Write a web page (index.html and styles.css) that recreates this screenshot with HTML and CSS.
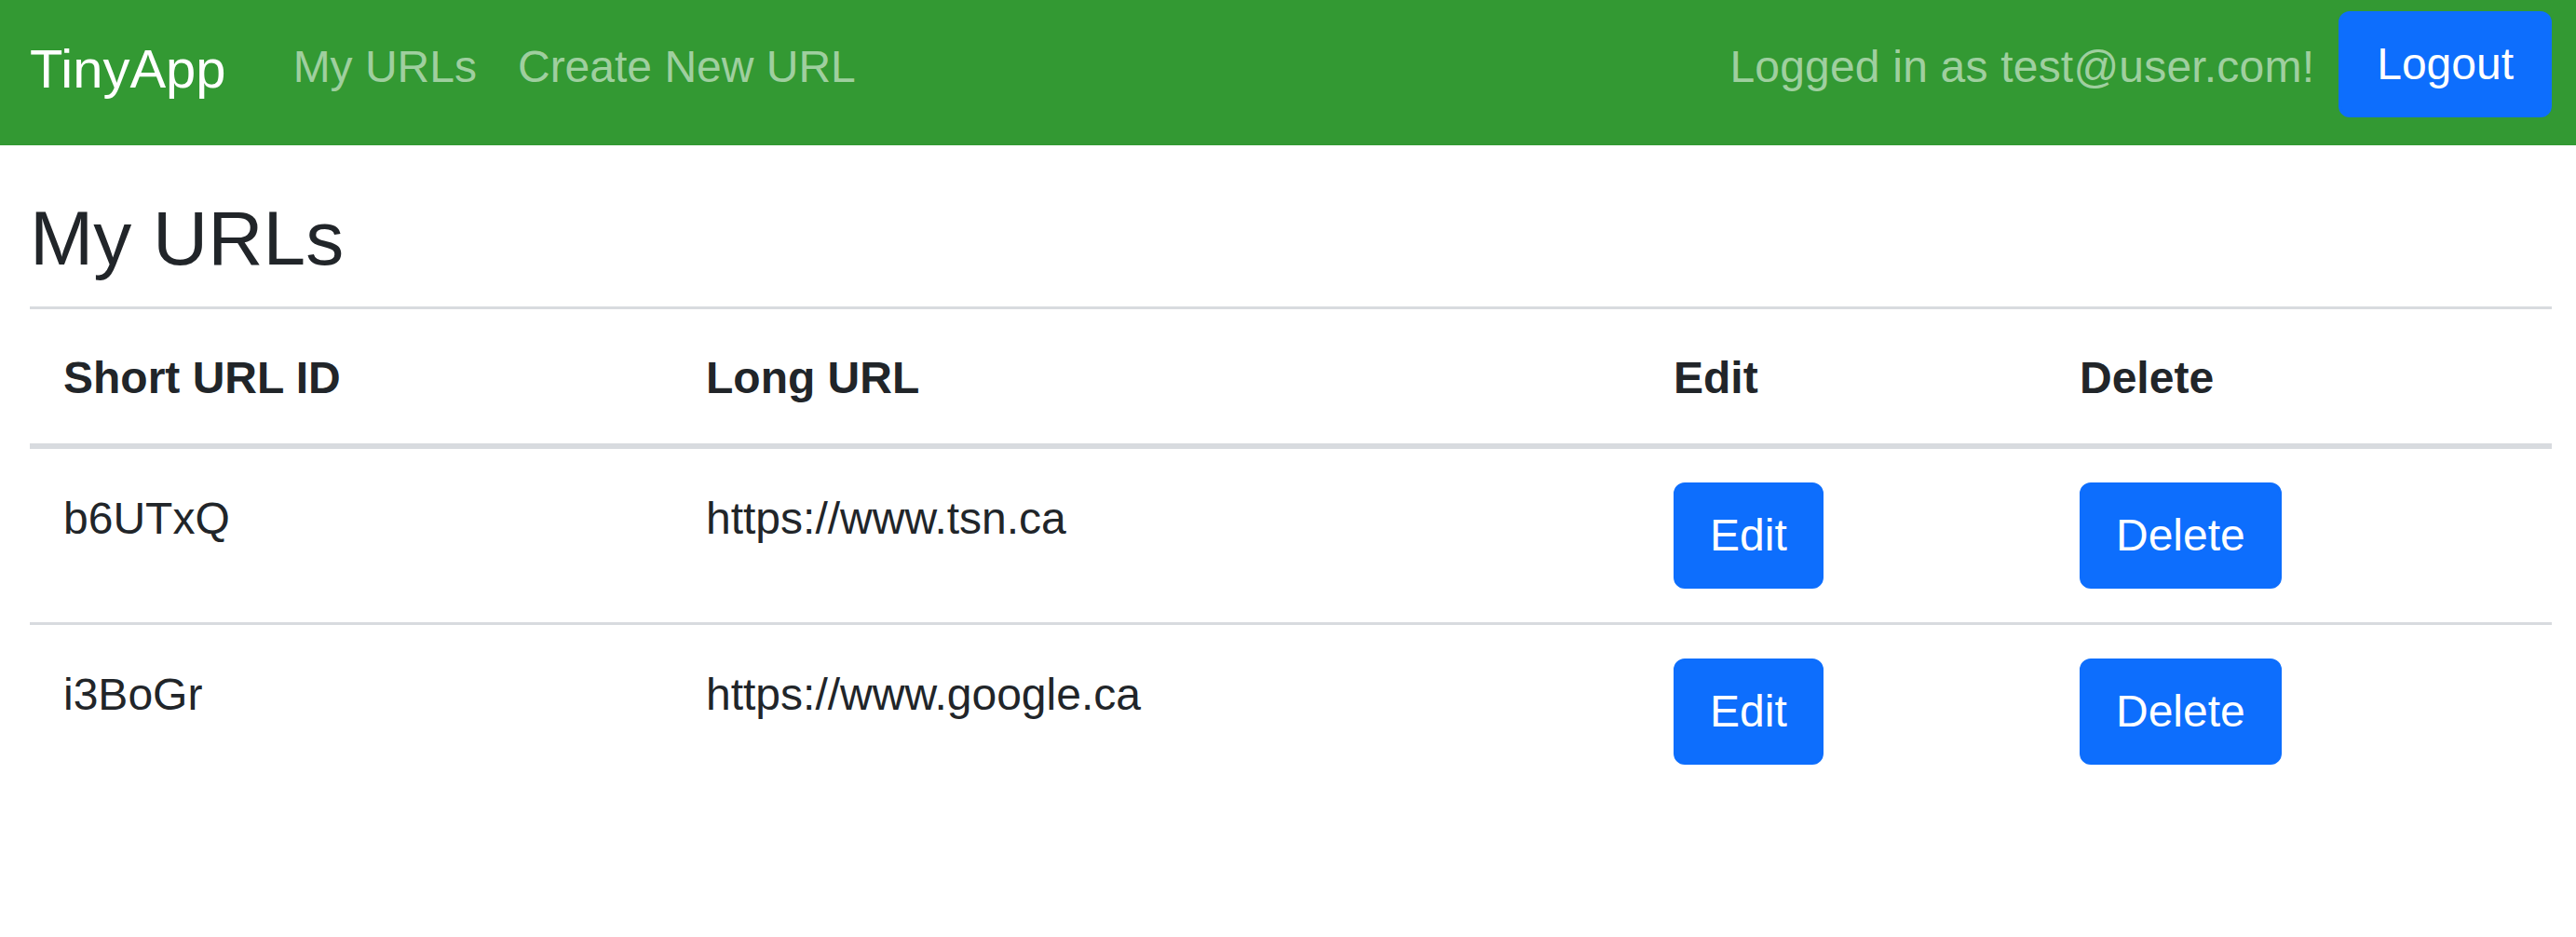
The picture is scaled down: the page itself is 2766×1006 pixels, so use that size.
FILE: index.html
```html
<!DOCTYPE html>
<html lang="en">
<head>
<meta charset="utf-8">
<title>TinyApp</title>
<link rel="stylesheet" href="styles.css">
</head>
<body>
<nav class="navbar">
  <a class="brand" href="#">TinyApp</a>
  <div class="nav-links">
    <a class="nav-link" href="#">My URLs</a>
    <a class="nav-link" href="#">Create New URL</a>
  </div>
  <div class="nav-right">
    <span class="user-text">Logged in as test@user.com!</span>
    <button class="btn btn-logout" type="button">Logout</button>
  </div>
</nav>
<main class="container">
  <h1 class="title">My URLs</h1>
  <hr class="divider">
  <table class="url-table">
    <thead>
      <tr>
        <th class="col-id">Short URL ID</th>
        <th class="col-long">Long URL</th>
        <th class="col-edit">Edit</th>
        <th class="col-del">Delete</th>
      </tr>
    </thead>
    <tbody>
      <tr class="row-bordered">
        <td class="text-cell">b6UTxQ</td>
        <td class="text-cell">https://www.tsn.ca</td>
        <td><button class="btn" type="button">Edit</button></td>
        <td><button class="btn" type="button">Delete</button></td>
      </tr>
      <tr>
        <td class="text-cell">i3BoGr</td>
        <td class="text-cell">https://www.google.ca</td>
        <td><button class="btn" type="button">Edit</button></td>
        <td><button class="btn" type="button">Delete</button></td>
      </tr>
    </tbody>
  </table>
</main>
</body>
</html>
```
FILE: styles.css
```css
* { box-sizing: border-box; }

body {
  margin: 0;
  font-family: "Liberation Sans", Arial, sans-serif;
  font-size: 48px;
  line-height: 72px;
  color: #212529;
  background: #ffffff;
}

.navbar {
  display: flex;
  align-items: flex-start;
  height: 156px;
  padding: 0 26px 0 32px;
  background: #339933;
}

.brand {
  margin-top: 30px;
  margin-right: 48px;
  font-size: 58px;
  line-height: 87px;
  color: #ffffff;
  text-decoration: none;
}

.nav-links {
  display: flex;
  margin-top: 36px;
}

.nav-link {
  padding: 0 24px;
  color: rgba(255, 255, 255, 0.55);
  text-decoration: none;
}

.nav-link + .nav-link {
  padding-left: 20px;
}

.nav-right {
  display: flex;
  align-items: flex-start;
  margin-left: auto;
}

.user-text {
  margin-top: 36px;
  margin-right: 26px;
  letter-spacing: 0.2px;
  color: rgba(255, 255, 255, 0.55);
}

.btn {
  display: inline-block;
  padding: 18px 36px;
  border: 3px solid #0d6efd;
  border-radius: 12px;
  background: #0d6efd;
  color: #ffffff;
  font-family: inherit;
  font-size: 48px;
  line-height: 72px;
  cursor: pointer;
}

.btn-logout {
  margin-top: 12px;
  padding: 18px 38px;
}

.container {
  padding: 0 26px 0 32px;
}

.title {
  margin: 51px 0 24px;
  font-size: 82px;
  line-height: 98px;
  font-weight: 500;
}

.divider {
  height: 3px;
  margin: 0;
  border: 0;
  background: #d8dbdf;
}

.url-table {
  width: 100%;
  table-layout: fixed;
  border-collapse: separate;
  border-spacing: 0;
}

.url-table th,
.url-table td {
  padding: 36px;
  text-align: left;
  vertical-align: top;
}

.url-table th {
  padding-top: 38px;
  padding-bottom: 34px;
  font-weight: 700;
  border-bottom: 6px solid #d8dbdf;
}

.url-table .text-cell {
  padding-top: 39px;
  padding-bottom: 33px;
}

.row-bordered td {
  border-bottom: 3px solid #d8dbdf;
}

.col-id { width: 690px; }
.col-long { width: 1039px; }
.col-edit { width: 436px; }
.col-del { width: auto; }
```
